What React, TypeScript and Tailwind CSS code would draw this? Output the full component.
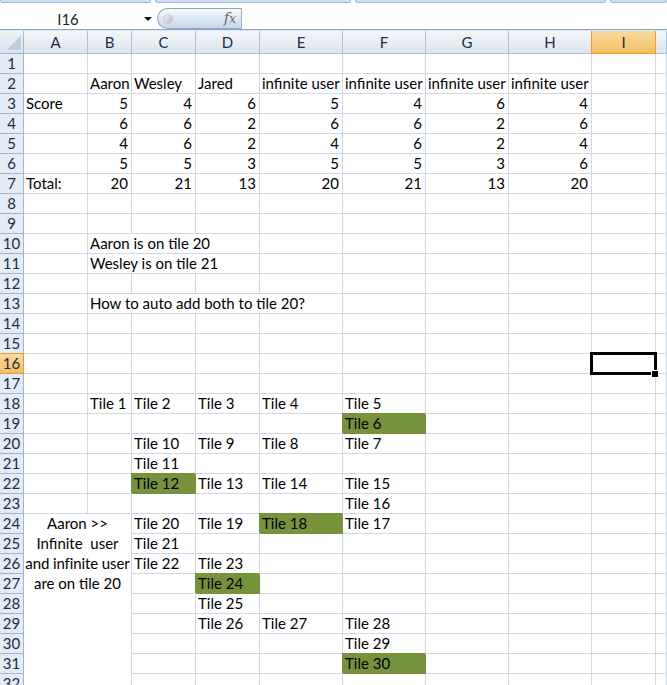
import React from 'react';

type C = { t: string; n?: boolean; g?: boolean; span?: number };

const COLS = ['A', 'B', 'C', 'D', 'E', 'F', 'G', 'H', 'I', 'J'];

const nums = (vals: number[]): Record<string, C> => {
  const out: Record<string, C> = {};
  vals.forEach((v, i) => {
    out[COLS[i + 1]] = { t: String(v), n: true };
  });
  return out;
};

const data: Record<number, Record<string, C>> = {
  2: {
    B: { t: 'Aaron' },
    C: { t: 'Wesley' },
    D: { t: 'Jared' },
    E: { t: 'infinite user' },
    F: { t: 'infinite user' },
    G: { t: 'infinite user' },
    H: { t: 'infinite user' },
  },
  3: { A: { t: 'Score' }, ...nums([5, 4, 6, 5, 4, 6, 4]) },
  4: nums([6, 6, 2, 6, 6, 2, 6]),
  5: nums([4, 6, 2, 4, 6, 2, 4]),
  6: nums([5, 5, 3, 5, 5, 3, 6]),
  7: { A: { t: 'Total:' }, ...nums([20, 21, 13, 20, 21, 13, 20]) },
  10: { B: { t: 'Aaron is on tile 20', span: 3 } },
  11: { B: { t: 'Wesley is on tile 21', span: 3 } },
  13: { B: { t: 'How to auto add both to tile 20?', span: 4 } },
  18: { B: { t: 'Tile 1' }, C: { t: 'Tile 2' }, D: { t: 'Tile 3' }, E: { t: 'Tile 4' }, F: { t: 'Tile 5' } },
  19: { F: { t: 'Tile 6', g: true } },
  20: { C: { t: 'Tile 10' }, D: { t: 'Tile 9' }, E: { t: 'Tile 8' }, F: { t: 'Tile 7' } },
  21: { C: { t: 'Tile 11' } },
  22: { C: { t: 'Tile 12', g: true }, D: { t: 'Tile 13' }, E: { t: 'Tile 14' }, F: { t: 'Tile 15' } },
  23: { F: { t: 'Tile 16' } },
  24: { C: { t: 'Tile 20' }, D: { t: 'Tile 19' }, E: { t: 'Tile 18', g: true }, F: { t: 'Tile 17' } },
  25: { C: { t: 'Tile 21' } },
  26: { C: { t: 'Tile 22' }, D: { t: 'Tile 23' } },
  27: { D: { t: 'Tile 24', g: true } },
  28: { D: { t: 'Tile 25' } },
  29: { D: { t: 'Tile 26' }, E: { t: 'Tile 27' }, F: { t: 'Tile 28' } },
  30: { F: { t: 'Tile 29' } },
  31: { F: { t: 'Tile 30', g: true } },
};

const spanClass: Record<number, string> = {
  2: 'col-span-2',
  3: 'col-span-3',
  4: 'col-span-4',
};

function Row({ r }: { r: number }) {
  const cells: React.ReactNode[] = [];
  const selected = r === 16;
  cells.push(
    <div
      key="h"
      className={
        selected
          ? 'border-b border-r border-[#f29536] bg-linear-to-b from-[#f9d99f] to-[#f1c15f] text-center leading-[18px] text-[#1d2d44] shadow-[0_-1px_0_#f29536]'
          : 'border-b border-r border-[#9eb6ce] bg-[#e4ecf7] text-center leading-[18px] text-[#1d2d44]'
      }
    >
      {r}
    </div>
  );
  const row = data[r] || {};
  for (let i = 0; i < COLS.length; i++) {
    const col = COLS[i];
    if (r >= 24 && (col === 'A' || col === 'B')) {
      if (r === 24 && col === 'A') {
        cells.push(
          <div key="merge" className="row-span-9 col-span-2 border-r border-[#d0d7e5] bg-white text-center">
            <div className="-mt-[1px] whitespace-pre leading-[20px]">
              <div>Aaron &gt;&gt;</div>
              <div>{'Infinite  user'}</div>
              <div className="tracking-[-0.1px]">and infinite user</div>
              <div>are on tile 20</div>
            </div>
          </div>
        );
      }
      continue;
    }
    const c = row[col];
    if (!c) {
      cells.push(<div key={col} className="border-b border-r border-[#d0d7e5]" />);
      continue;
    }
    let cls = 'overflow-hidden whitespace-nowrap border-b border-r px-[2px] leading-[18px] ';
    cls += c.g ? 'border-[#76933c] bg-[#76933c] shadow-[-1px_-1px_0_0_#76933c] ' : 'border-[#d0d7e5] ';
    cls += c.n ? 'pr-[3px] text-right ' : '';
    if (c.span) {
      cls += spanClass[c.span] + ' ';
      i += c.span - 1;
    }
    cells.push(
      <div key={col} className={cls}>
        {c.t}
      </div>
    );
  }
  return <>{cells}</>;
}

export default function App() {
  const rows = Array.from({ length: 32 }, (_, i) => i + 1);
  return (
    <div className="relative h-[685px] w-full overflow-hidden bg-white font-['Lato',sans-serif] text-[15px] text-black">
      {/* top tab strip */}
      <div className="flex h-[3px]">
        <div className="w-[151px] rounded-b-[3px] border-x border-b border-[#9ab7df] bg-[#cfdff4]" />
        <div className="ml-[4px] w-[196px] rounded-b-[3px] border-x border-b border-[#9ab7df] bg-[#cfdff4]" />
        <div className="ml-[4px] w-[251px] rounded-b-[3px] border-x border-b border-[#9ab7df] bg-[#cfdff4]" />
        <div className="ml-[4px] flex-1 rounded-b-[3px] border-x border-b border-[#9ab7df] bg-[#cfdff4]" />
      </div>
      {/* formula bar */}
      <div className="mt-[5px] flex h-[21px]">
        <div className="w-[136px] text-center leading-[22px] text-[#222]">I16</div>
        <div className="relative w-[21px]">
          <svg className="absolute left-[8px] top-[9px]" width="8" height="4" viewBox="0 0 8 4">
            <polygon points="0,0 8,0 4,4" fill="#111" />
          </svg>
        </div>
        <div className="flex w-[84px] items-center justify-between rounded-l-full border border-r-0 border-[#8ca6c9] bg-linear-to-b from-[#f5f8fc] to-[#c8d7ec] pl-[5px] pr-[5px]">
          <div className="h-[10px] w-[10px] rounded-full border border-[#c4cad3] bg-linear-to-br from-[#f6f6f6] to-[#b3b9c2]" />
          <span className="font-['DejaVu_Serif',serif] text-[15px] italic leading-none text-[#6b6b6b]">
            f<span className="text-[12px]">x</span>
          </span>
        </div>
        <div className="flex-1 border-l border-[#9cb1cc] bg-white" />
      </div>
      <div className="h-px bg-[#8fa4bf]" />
      <div className="h-px bg-[#dfe7f1]" />
      {/* grid */}
      <div className="grid grid-cols-[24px_64px_44px_64px_64px_83px_83px_83px_83px_64px_1fr] grid-rows-[23px] auto-rows-[20px]">
        <div className="relative border-b border-r border-[#9eb6ce] bg-linear-to-b from-[#eef2f8] to-[#dbe3ee]">
          <svg className="absolute left-0 top-0" width="23" height="22" viewBox="0 0 23 22">
            <polygon points="21,4 21,19 7,19" fill="#bfcddf" />
          </svg>
        </div>
        {COLS.map((c) =>
          c === 'I' ? (
            <div
              key={c}
              className="border-b border-r border-[#f29536] bg-linear-to-b from-[#f9d99f] to-[#f1c15f] text-center leading-[22px] text-[#1d2d44] shadow-[-1px_0_0_#f29536]"
            >
              {c}
            </div>
          ) : (
            <div
              key={c}
              className="border-b border-r border-[#a9bfd6] bg-linear-to-b from-[#f3f6fa] to-[#dde5ef] text-center leading-[22px] text-[#1d2d44]"
            >
              {c === 'J' ? '' : c}
            </div>
          )
        )}
        {rows.map((r) => (
          <Row key={r} r={r} />
        ))}
      </div>
      {/* active cell */}
      <div className="absolute left-[590px] top-[352px] h-[23px] w-[67px] border-[3px] border-black" />
      <div className="absolute left-[652px] top-[371px] h-[6px] w-[6px] bg-black shadow-[0_0_0_1px_#fff]" />
    </div>
  );
}
